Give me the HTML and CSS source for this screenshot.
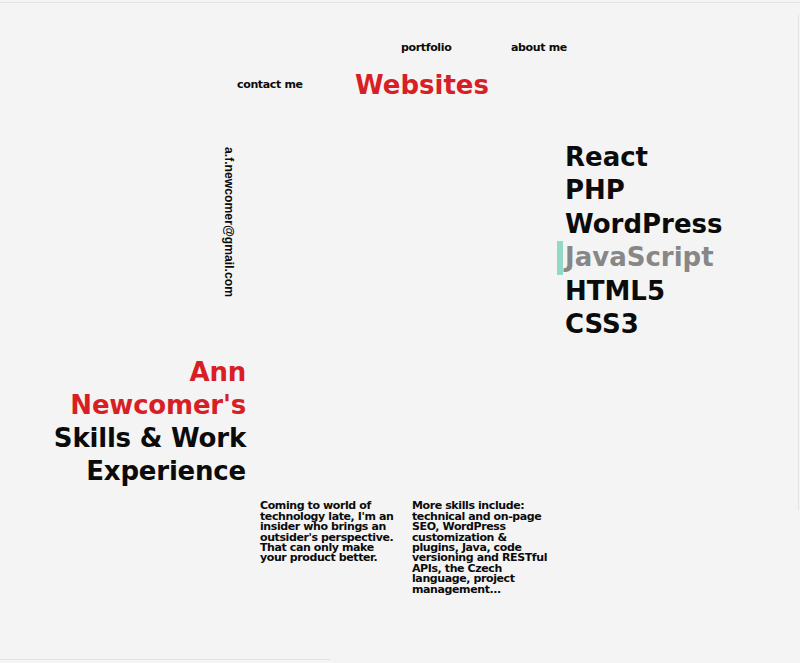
FILE: index.html
```html
<!DOCTYPE html>
<html lang="en">
<head>
<meta charset="utf-8">
<title>Ann Newcomer - Websites</title>
<link rel="stylesheet" href="styles.css">
</head>
<body>
<header class="nav">
  <a class="nav-link portfolio" href="#">portfolio</a>
  <a class="nav-link about" href="#">about me</a>
  <a class="nav-link contact" href="#">contact me</a>
  <a class="nav-title" href="#">Websites</a>
</header>
<main class="layout">
  <div class="email">a.f.newcomer@gmail.com</div>
  <ul class="skills">
    <li>React</li>
    <li>PHP</li>
    <li>WordPress</li>
    <li class="active">JavaScript</li>
    <li>HTML5</li>
    <li>CSS3</li>
  </ul>
  <h1 class="title"><span class="accent">Ann<br>Newcomer's</span><br>Skills &amp; Work<br>Experience</h1>
  <p class="blurb one">Coming to world of<br>technology late, I'm an<br>insider who brings an<br>outsider's perspective.<br>That can only make<br>your product better.</p>
  <p class="blurb two">More skills include:<br>technical and on-page<br>SEO, WordPress<br>customization &amp;<br>plugins, Java, code<br>versioning and RESTful<br>APIs, the Czech<br>language, project<br>management...</p>
</main>
</body>
</html>
```

FILE: styles.css
```css
html, body {
  margin: 0;
  padding: 0;
}
body {
  background: #f4f4f4;
  color: #0b0b0b;
  font-family: "DejaVu Sans", "Noto Sans", sans-serif;
  font-weight: bold;
  height: 661px;
  overflow: hidden;
  border-top: 1px solid #e4e4e4;
  box-sizing: border-box;
  margin-top: 2px;
  position: relative;
}
body::before {
  content: "";
  position: fixed;
  right: 1px;
  top: 15px;
  width: 1px;
  height: 495px;
  background: #e2e2e2;
}
body::after {
  content: "";
  position: fixed;
  left: 0;
  top: 659px;
  width: 330px;
  height: 1px;
  background: #e2e2e6;
}
a {
  color: inherit;
  text-decoration: none;
}
.nav {
  display: grid;
  grid-template-columns: 237px 118px 46px 110px 1fr;
  grid-template-rows: 14px 33px;
  row-gap: 13px;
  padding-top: 38px;
  align-items: center;
}
.nav-link {
  font-size: 11px;
  line-height: 14px;
  letter-spacing: -0.35px;
}
.portfolio { grid-column: 4; grid-row: 1; }
.about { grid-column: 5; grid-row: 1; }
.contact { grid-column: 2; grid-row: 2; }
.nav-title {
  grid-column: 3 / 6;
  grid-row: 2;
  font-size: 26px;
  line-height: 33px;
  color: #d81f26;
  margin-top: 1px;
}
.layout {
  display: grid;
  grid-template-columns: 222px 38px 152px 145px 8px 1fr;
  margin-top: 40px;
}
.email {
  grid-column: 2;
  grid-row: 1;
  justify-self: start;
  writing-mode: vertical-rl;
  font-family: "Liberation Sans", Arial, sans-serif;
  font-size: 12.2px;
  line-height: 14px;
  margin-top: 6px;
}
.skills {
  grid-column: 5 / 7;
  grid-row: 1;
  list-style: none;
  margin: 0;
  padding: 0 0 0 8px;
  font-size: 26px;
  line-height: 33.4px;
}
.skills .active {
  color: #878787;
  margin-left: -8px;
  padding-left: 2px;
  border-left: 6px solid #93d9c7;
}
.title {
  grid-column: 1 / 3;
  grid-row: 2;
  margin: 15px 0 0;
  padding-right: 14px;
  text-align: right;
  font-size: 26px;
  line-height: 33px;
  letter-spacing: -0.2px;
}
.accent {
  color: #d81f26;
}
.blurb {
  grid-row: 3;
  margin: 13px 0 0;
  font-size: 11px;
  line-height: 10.4px;
  letter-spacing: -0.4px;
}
.one { grid-column: 3; }
.two { grid-column: 4 / 6; }
```
